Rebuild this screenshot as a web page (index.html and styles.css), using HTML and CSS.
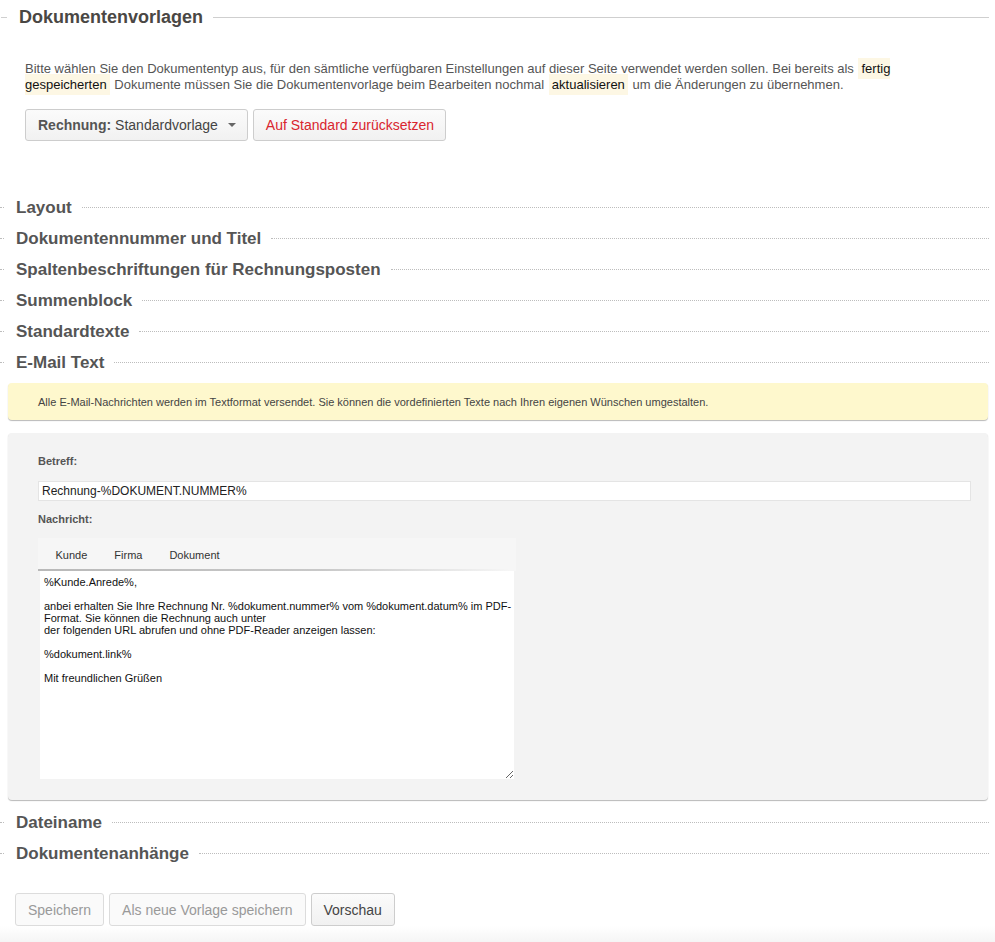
FILE: index.html
```html
<!DOCTYPE html>
<html lang="de">
<head>
<meta charset="utf-8">
<title>Dokumentenvorlagen</title>
<link rel="stylesheet" href="styles.css">
</head>
<body>
<div class="page">
  <div class="legend">
    <span class="legend-lead"></span>
    <h1 class="legend-title">Dokumentenvorlagen</h1>
    <span class="legend-line"></span>
  </div>

  <p class="intro">Bitte wählen Sie den Dokumententyp aus, für den sämtliche verfügbaren Einstellungen auf dieser Seite verwendet werden sollen. Bei bereits als <span class="hl">fertig gespeicherten</span> Dokumente müssen Sie die Dokumentenvorlage beim Bearbeiten nochmal <span class="hl">aktualisieren</span> um die Änderungen zu übernehmen.</p>

  <div class="btn-row top-btns">
    <button class="btn"><b class="btn-strong">Rechnung:</b> Standardvorlage <span class="caret"></span></button>
    <button class="btn btn-danger">Auf Standard zurücksetzen</button>
  </div>

  <div class="sections">
    <div class="section-row"><span class="dot-lead"></span><h2 class="section-title">Layout</h2><span class="dot-line"></span></div>
    <div class="section-row"><span class="dot-lead"></span><h2 class="section-title">Dokumentennummer und Titel</h2><span class="dot-line"></span></div>
    <div class="section-row"><span class="dot-lead"></span><h2 class="section-title">Spaltenbeschriftungen für Rechnungsposten</h2><span class="dot-line"></span></div>
    <div class="section-row"><span class="dot-lead"></span><h2 class="section-title">Summenblock</h2><span class="dot-line"></span></div>
    <div class="section-row"><span class="dot-lead"></span><h2 class="section-title">Standardtexte</h2><span class="dot-line"></span></div>
    <div class="section-row"><span class="dot-lead"></span><h2 class="section-title">E-Mail Text</h2><span class="dot-line"></span></div>
  </div>

  <div class="notice">Alle E-Mail-Nachrichten werden im Textformat versendet. Sie können die vordefinierten Texte nach Ihren eigenen Wünschen umgestalten.</div>

  <div class="panel">
    <label class="field-label" for="betreff">Betreff:</label>
    <input class="text-input" id="betreff" type="text" value="Rechnung-%DOKUMENT.NUMMER%">
    <label class="field-label label-msg" for="nachricht">Nachricht:</label>
    <div class="editor">
      <div class="editor-tabs">
        <span class="editor-tab">Kunde</span>
        <span class="editor-tab">Firma</span>
        <span class="editor-tab">Dokument</span>
      </div>
      <textarea class="editor-area" id="nachricht" wrap="off">%Kunde.Anrede%,

anbei erhalten Sie Ihre Rechnung Nr. %dokument.nummer% vom %dokument.datum% im PDF-
Format. Sie können die Rechnung auch unter
der folgenden URL abrufen und ohne PDF-Reader anzeigen lassen:

%dokument.link%

Mit freundlichen Grüßen</textarea>
    </div>
  </div>

  <div class="sections sections-after">
    <div class="section-row"><span class="dot-lead"></span><h2 class="section-title">Dateiname</h2><span class="dot-line"></span></div>
    <div class="section-row"><span class="dot-lead"></span><h2 class="section-title">Dokumentenanhänge</h2><span class="dot-line"></span></div>
  </div>
</div>

<div class="actions">
  <div class="btn-row">
    <button class="btn btn-disabled">Speichern</button>
    <button class="btn btn-disabled">Als neue Vorlage speichern</button>
    <button class="btn">Vorschau</button>
  </div>
</div>
</body>
</html>
```

FILE: styles.css
```css
* { box-sizing: border-box; }

html, body {
  margin: 0;
  padding: 0;
  background: #fff;
}

body {
  font-family: "Liberation Sans", Arial, Helvetica, sans-serif;
  color: #555;
}

.page {
  padding: 0 6px 0 0;
}

/* Top legend */
.legend {
  display: flex;
  align-items: center;
  height: 34px;
}
.legend-lead {
  width: 6px;
  margin-left: 1px;
  border-top: 1px solid #cfcfcf;
}
.legend-title {
  margin: 0 10px 0 12px;
  font-size: 18px;
  font-weight: bold;
  color: #4a4744;
  white-space: nowrap;
}
.legend-line {
  flex: 1;
  border-top: 1px solid #cfcfcf;
}

.intro {
  margin: 27px 0 0 25px;
  max-width: 900px;
  font-size: 13px;
  line-height: 16px;
  color: #555;
}
.hl {
  background: #fdf7e4;
  color: #111;
  box-shadow: 0 0 0 3px #fdf7e4;
  margin: 0 4px;
}

/* Buttons */
.btn-row {
  display: flex;
  gap: 5px;
}
.top-btns {
  margin: 16px 0 0 25px;
}
.btn {
  height: 32px;
  padding: 0 11px 0 12px;
  border: 1px solid #cdcdcd;
  border-radius: 3px;
  background: linear-gradient(to bottom, #fbfbfb, #f1f1f1);
  font-family: "Liberation Sans", Arial, Helvetica, sans-serif;
  font-size: 14px;
  color: #444;
  display: inline-flex;
  align-items: center;
  white-space: nowrap;
}
.btn-strong {
  font-weight: bold;
  color: #555;
  margin-right: 4px;
}
.caret {
  display: inline-block;
  width: 0;
  height: 0;
  margin-left: 10px;
  border-top: 4px solid #666;
  border-left: 4px solid transparent;
  border-right: 4px solid transparent;
}
.btn-danger {
  color: #d9252e;
}
.btn-disabled {
  color: #999;
  border-color: #dcdcdc;
  background: #fafafa;
}

/* Section headings with dotted rules */
.sections {
  margin-top: 51px;
}
.sections-after {
  margin-top: 7px;
}
.section-row {
  display: flex;
  align-items: center;
  height: 31px;
}
.dot-lead {
  width: 4px;
  border-top: 1px dotted #bdbdbd;
}
.section-title {
  margin: 0 10px 0 12px;
  font-size: 17px;
  font-weight: bold;
  color: #555;
  white-space: nowrap;
}
.dot-line {
  flex: 1;
  border-top: 1px dotted #bdbdbd;
}

/* Yellow notice */
.notice {
  margin: 5px 1px 0 8px;
  padding: 12px 30px 11px;
  background: #fef8cd;
  border-radius: 4px;
  box-shadow: 0 1px 1px rgba(0, 0, 0, 0.28);
  font-size: 11px;
  line-height: 14px;
  color: #444;
}

/* Gray panel */
.panel {
  margin: 13px 1px 0 8px;
  padding: 21px 17px 21px 30px;
  background: #f3f3f3;
  border-radius: 4px;
  box-shadow: 0 1px 1px rgba(0, 0, 0, 0.28);
}
.field-label {
  display: block;
  font-size: 11px;
  line-height: 14px;
  font-weight: bold;
  color: #555;
  margin-bottom: 13px;
}
.label-msg {
  margin-top: 11px;
  margin-bottom: 12px;
}
.text-input {
  display: block;
  width: 100%;
  height: 20px;
  padding: 0 3px;
  border: 1px solid #e4e4e4;
  background: #fff;
  font-family: "Liberation Sans", Arial, Helvetica, sans-serif;
  font-size: 12px;
  color: #222;
  outline: none;
}

.editor {
  width: 478px;
}
.editor-tabs {
  display: flex;
  align-items: center;
  height: 33px;
  padding-left: 4px;
  background: #f6f6f6;
  position: relative;
}
.editor-tabs::after {
  content: "";
  position: absolute;
  left: 0;
  right: 6px;
  bottom: 0;
  height: 2px;
  background: linear-gradient(to right, #a9a9a9, #bdbdbd 60%, rgba(220, 220, 220, 0));
  opacity: 0.8;
}
.editor-tab {
  padding: 0 13.5px;
  font-size: 11px;
  color: #333;
}
.editor-area {
  display: block;
  width: 474px;
  height: 208px;
  margin: 0 2px;
  padding: 5px 4px;
  border: none;
  background: #fff;
  font-family: "Liberation Sans", Arial, Helvetica, sans-serif;
  font-size: 11px;
  line-height: 12px;
  color: #111;
  overflow: hidden;
  white-space: pre;
  resize: both;
  outline: none;
}

/* Bottom actions */
.actions {
  margin-top: 24px;
  padding: 0 0 16px 15px;
  background: linear-gradient(to bottom, #fff 0, #fff 33px, #f5f5f5 100%);
}
.actions .btn {
  height: 33px;
  padding: 0 12px;
}
```
